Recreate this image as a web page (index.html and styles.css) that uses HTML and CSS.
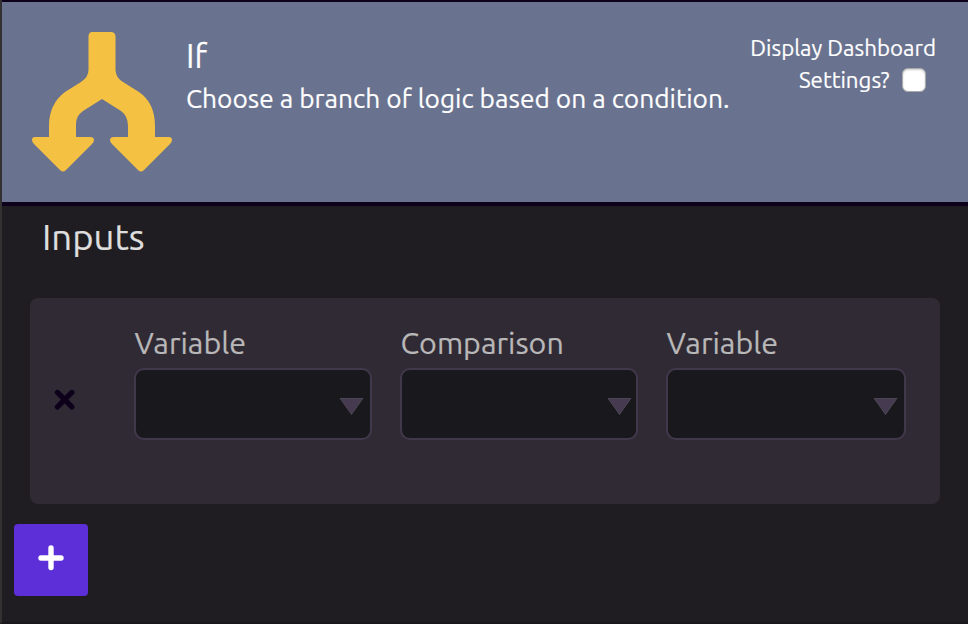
FILE: index.html
```html
<!DOCTYPE html>
<html lang="en">
<head>
<meta charset="utf-8">
<title>If</title>
<link rel="stylesheet" href="styles.css">
</head>
<body>
<main class="panel">
  <header class="header">
    <svg class="logo" viewBox="0 0 140 140" aria-hidden="true">
      <path d="M60 0H79Q83 0 83.500 4V38Q84 46 91 50L107 60Q123 71 123 94V105H137Q140 105 140 108Q140 110 138 112L112 138Q109 141 106 138L80 112Q78 110 78 108Q78 105 82 105H96V94Q96 84 89 79L70 67L51 79Q44 84 44 92V105H58Q62 105 62 108Q62 110 60 112L34 138Q31 141 28 138L2 112Q0 110 0 108Q0 105 3 105H17V94Q17 72 33 60L49 50Q56.500 45 56.500 38V4Q57 0 60 0Z"/>
    </svg>
    <div class="intro">
      <h1 class="title">If</h1>
      <p class="description">Choose a branch of logic based on a condition.</p>
    </div>
    <label class="setting">
      <span class="setting-line">Display Dashboard</span>
      <span class="setting-line last"><span>Settings?</span><input class="check" type="checkbox"></span>
    </label>
  </header>
  <h2 class="heading">Inputs</h2>
  <section class="card">
    <button class="remove" aria-label="Remove">
      <svg viewBox="0 0 20 20"><path d="M3.300 3.300L17 17M17 3.300L3.300 17"/></svg>
    </button>
    <div class="field">
      <span class="label">Variable</span>
      <div class="select"><svg class="arrow" viewBox="0 0 24 17"><path d="M0 .3H23L11.5 16.5Z"/></svg></div>
    </div>
    <div class="field">
      <span class="label">Comparison</span>
      <div class="select near"><svg class="arrow" viewBox="0 0 24 17"><path d="M0 .3H23L11.5 16.5Z"/></svg></div>
    </div>
    <div class="field wide">
      <span class="label">Variable</span>
      <div class="select"><svg class="arrow" viewBox="0 0 24 17"><path d="M0 .3H23L11.5 16.5Z"/></svg></div>
    </div>
  </section>
  <button class="add" aria-label="Add">
    <svg viewBox="0 0 26 26"><path d="M13 3V22.500M3 13H23"/></svg>
  </button>
</main>
</body>
</html>
```
FILE: styles.css
```css
* { box-sizing: border-box; }

body {
  margin: 0;
  background: #1f1d21;
  font-family: Ubuntu, "Noto Sans", sans-serif;
  -webkit-text-stroke: .2px currentColor;
}

.panel {
  height: 624px;
  border-left: 2px solid #333132;
  border-bottom: 2px solid #19171a;
  overflow: hidden;
}

.header {
  display: flex;
  height: 206px;
  padding: 30px 32px 0 30px;
  background: #69728f;
  border-top: 2px solid #0e001b;
  border-bottom: 4px solid #0e001b;
  color: #fff;
}

.logo { width: 140px; height: 140px; flex: none; fill: #f5c142; }

.intro { flex: 1; min-width: 0; padding: 3px 0 0 14px; white-space: nowrap; }

.title, .description { margin: 0; font-weight: 400; line-height: 42px; }
.title { height: 43px; font-size: 33px; }
.description { font-size: 26.28px; }

.setting {
  display: flex;
  flex-direction: column;
  align-items: flex-end;
  font-size: 22.3px;
  white-space: nowrap;
}

.setting-line { display: flex; height: 32px; line-height: 32px; }
.last { align-items: center; padding-right: 10px; gap: 12.5px; }

.check {
  appearance: none;
  width: 24px;
  height: 24px;
  margin: 0;
  border: 1px solid #aaa;
  border-radius: 6px;
  background: #fff;
  box-shadow: inset 0 1px 2px #ccc;
}

.heading {
  margin: 7px 0 37px 40px;
  color: #dedede;
  font-size: 36.5px;
  font-weight: 400;
  line-height: 48px;
}

.card {
  display: flex;
  width: 910px;
  height: 206px;
  margin-left: 28px;
  padding: 25px 34px 0 24px;
  border-radius: 8px;
  background: #302a35;
}

.remove {
  width: 21px;
  height: 21px;
  margin: 66px 59px 0 0;
  padding: 0;
  border: 0;
  background: none;
}

.remove svg { display: block; width: 21px; height: 21px; fill: none; stroke: #0e001b; stroke-width: 5; stroke-linecap: round; }

.field { width: 238px; margin-right: 28px; }
.wide { width: 240px; margin-right: 0; }

.label {
  display: block;
  height: 45px;
  padding-left: .5px;
  color: #b9b8b8;
  font-size: 30.4px;
  line-height: 40px;
  white-space: nowrap;
}

.select {
  display: flex;
  justify-content: flex-end;
  height: 72px;
  padding: 28px 6px 0 0;
  border: 2px solid #42384c;
  border-radius: 10px;
  background: #19181c;
}

.near { padding-right: 4px; }

.arrow { width: 24px; height: 17px; fill: #453a50; stroke: #6a6570; stroke-width: .5; }

.add {
  display: flex;
  align-items: center;
  justify-content: center;
  width: 74px;
  height: 72px;
  margin: 20px 0 0 12px;
  padding: 0 0 5px;
  border: 0;
  border-radius: 4px;
  background: #5c2fd8;
}

.add svg { width: 26px; height: 26px; fill: none; stroke: #fff; stroke-width: 5.4; stroke-linecap: round; }
```
